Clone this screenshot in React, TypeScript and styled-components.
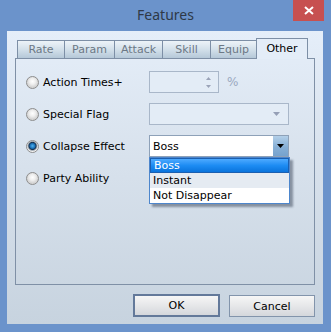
import React from 'react'
import styled, { createGlobalStyle } from 'styled-components'

const Global = createGlobalStyle`
    html, body {
        margin: 0;
        padding: 0;
        background: #6b93cb;
    }
    body {
        font-family: "DejaVu Sans", sans-serif;
        font-size: 11px;
    }
`

const Window = styled.div`
    width: 331px;
    height: 332px;
    box-sizing: border-box;
    background: #6b93cb;
    display: flex;
    flex-direction: column;
`

const TitleBar = styled.div`
    height: 31px;
    flex: none;
    display: grid;
    grid-template-columns: 38px 1fr 31px;
    padding-right: 7px;
    align-items: start;
`

const Title = styled.div`
    grid-column: 2;
    text-align: center;
    font-family: "Noto Sans", sans-serif;
    font-size: 14px;
    line-height: 30px;
    color: #2e3947;
`

const CloseButton = styled.div`
    height: 21px;
    background: #c75050;
    display: flex;
    align-items: center;
    justify-content: center;
`

const Client = styled.div`
    flex: 1;
    margin: 0 8px 8px 7px;
    padding: 7px 8px 7px 8px;
    background: linear-gradient(to bottom, #e5eef9 0%, #d6e0eb 50%, #c7d3df 100%);
    display: flex;
    flex-direction: column;
`

const TabStrip = styled.div`
    height: 20px;
    flex: none;
    display: flex;
    align-items: flex-end;
    padding-left: 2px;
`

const Tab = styled.div<{ $w: number; $active?: boolean }>`
    box-sizing: border-box;
    width: ${p => p.$w}px;
    height: ${p => (p.$active ? 21 : 18)}px;
    margin-left: -1px;
    margin-bottom: ${p => (p.$active ? -1 : 0)}px;
    border: 1px solid #7d8fa6;
    border-bottom: ${p => (p.$active ? 'none' : '0')};
    background: ${p => p.$active
        ? '#e4edf8'
        : 'linear-gradient(to bottom, #edf3f8 0%, #d3e0ea 50%, #b5c8d8 100%)'};
    color: ${p => (p.$active ? '#000' : '#6c7885')};
    text-align: center;
    line-height: ${p => (p.$active ? 19 : 17)}px;
    position: relative;
    z-index: ${p => (p.$active ? 1 : 0)};
    &:first-child {
        margin-left: 0;
    }
`

const Panel = styled.div`
    flex: 1;
    border: 1px solid #7f90a6;
    padding: 12px 10px;
    display: grid;
    grid-template-columns: 123px auto;
    grid-auto-rows: 22px;
    row-gap: 10px;
    align-content: start;
`

const Option = styled.label`
    display: flex;
    align-items: center;
    gap: 4px;
    color: #000;
    white-space: nowrap;
`

const Radio = styled.span<{ $checked?: boolean }>`
    box-sizing: border-box;
    width: 13px;
    height: 13px;
    border-radius: 50%;
    border: 1px solid #8d8d8d;
    background: ${p => p.$checked
        ? 'radial-gradient(circle at 50% 45%, #4fb3f0 0px, #1a6eb4 2.5px, #15304f 3.6px, #9aa4ae 4.4px, #f4f4f4 5.5px)'
        : 'radial-gradient(circle at 50% 40%, #ffffff 0px, #eeeeee 3px, #d5d5d5 5.5px)'};
    flex: none;
`

const ControlCell = styled.div`
    display: flex;
    align-items: center;
    gap: 8px;
    position: relative;
`

const Spin = styled.div`
    box-sizing: border-box;
    width: 70px;
    height: 22px;
    border: 1px solid #a9b7c9;
    background: #e3ecf6;
    display: flex;
    justify-content: flex-end;
    padding-right: 7px;
`

const SpinArrows = styled.div`
    display: flex;
    flex-direction: column;
    justify-content: center;
    gap: 5px;
`

const Percent = styled.span`
    color: #9aa8bf;
    font-size: 12px;
`

const Combo = styled.div<{ $disabled?: boolean }>`
    box-sizing: border-box;
    width: 140px;
    height: 22px;
    border: 1px solid ${p => (p.$disabled ? '#a9b7c9' : '#8ea1b8')};
    background: ${p => (p.$disabled ? '#e3ecf6' : '#ffffff')};
    display: flex;
    align-items: center;
    padding-left: 3px;
    color: #000;
    position: relative;
`

const ComboText = styled.span`
    flex: 1;
`

const ComboArrow = styled.div<{ $disabled?: boolean }>`
    width: 15px;
    align-self: stretch;
    background: ${p => (p.$disabled ? 'transparent' : 'linear-gradient(to bottom, #b3cfe8 0%, #86afd6 55%, #76a2cd 100%)')};
    display: flex;
    align-items: center;
    justify-content: center;
    padding-right: ${p => (p.$disabled ? 4 : 0)}px;
`

const DropList = styled.div`
    position: absolute;
    left: -1px;
    top: 21px;
    width: 141px;
    box-sizing: border-box;
    border: 1px solid #4d86cc;
    background: #ffffff;
    box-shadow: 3px 3px 2px rgba(40, 50, 70, 0.45);
    z-index: 2;
`

const DropItem = styled.div<{ $selected?: boolean; $alt?: boolean }>`
    box-sizing: border-box;
    height: 15px;
    padding-left: 3px;
    color: ${p => (p.$selected ? '#ffffff' : '#000')};
    background: ${p => p.$selected
        ? 'linear-gradient(to bottom, #4eaaff 0%, #1d8cf3 50%, #0a74dc 100%)'
        : p.$alt ? '#e5ebf2' : '#ffffff'};
    border: ${p => (p.$selected ? '1px solid #1b5fb0' : 'none')};
    line-height: ${p => (p.$selected ? 13 : 15)}px;
`

const ButtonRow = styled.div`
    margin-top: 9px;
    display: flex;
    justify-content: flex-end;
    align-items: flex-end;
    gap: 9px;
    flex: none;
`

const Button = styled.div<{ $default?: boolean }>`
    box-sizing: border-box;
    width: ${p => (p.$default ? 87 : 86)}px;
    height: ${p => (p.$default ? 23 : 22)}px;
    border: ${p => (p.$default ? '2px solid #63799a' : '1px solid #8294ab')};
    background: linear-gradient(to bottom, #f6f6f6 0%, #e6e7e9 50%, #d4d7dc 100%);
    display: flex;
    align-items: center;
    justify-content: center;
    color: #000;
`

function Triangle(props: { up?: boolean; color: string; w?: number; h?: number }) {
    const { up, color, w = 7, h = 4 } = props
    return (
        <svg width={w} height={h} viewBox={`0 0 ${w} ${h}`}>
            <polygon
                points={up ? `0,${h} ${w},${h} ${w / 2},0` : `0,0 ${w},0 ${w / 2},${h}`}
                fill={color}
            />
        </svg>
    )
}

const tabs = [
    { name: 'Rate', w: 48 },
    { name: 'Param', w: 51 },
    { name: 'Attack', w: 49 },
    { name: 'Skill', w: 49 },
    { name: 'Equip', w: 47 },
    { name: 'Other', w: 52, active: true },
]

export default function App() {
    return (
        <Window>
            <Global />
            <TitleBar>
                <Title>Features</Title>
                <CloseButton>
                    <svg width="10" height="9" viewBox="0 0 10 9">
                        <path d="M1 1 L9 8 M9 1 L1 8" stroke="#fff" strokeWidth="2" />
                    </svg>
                </CloseButton>
            </TitleBar>
            <Client>
                <TabStrip>
                    {tabs.map(t => (
                        <Tab key={t.name} $w={t.w} $active={t.active}>{t.name}</Tab>
                    ))}
                </TabStrip>
                <Panel>
                    <Option><Radio />Action Times+</Option>
                    <ControlCell>
                        <Spin>
                            <SpinArrows>
                                <Triangle up color="#9aa3b8" w={5} h={3} />
                                <Triangle color="#9aa3b8" w={5} h={3} />
                            </SpinArrows>
                        </Spin>
                        <Percent>%</Percent>
                    </ControlCell>

                    <Option><Radio />Special Flag</Option>
                    <ControlCell>
                        <Combo $disabled>
                            <ComboText />
                            <ComboArrow $disabled>
                                <Triangle color="#959fb6" />
                            </ComboArrow>
                        </Combo>
                    </ControlCell>

                    <Option><Radio $checked />Collapse Effect</Option>
                    <ControlCell>
                        <Combo>
                            <ComboText>Boss</ComboText>
                            <ComboArrow>
                                <Triangle color="#000" />
                            </ComboArrow>
                            <DropList>
                                <DropItem $selected>Boss</DropItem>
                                <DropItem $alt>Instant</DropItem>
                                <DropItem>Not Disappear</DropItem>
                            </DropList>
                        </Combo>
                    </ControlCell>

                    <Option><Radio />Party Ability</Option>
                    <div />
                </Panel>
                <ButtonRow>
                    <Button $default>OK</Button>
                    <Button>Cancel</Button>
                </ButtonRow>
            </Client>
        </Window>
    )
}
